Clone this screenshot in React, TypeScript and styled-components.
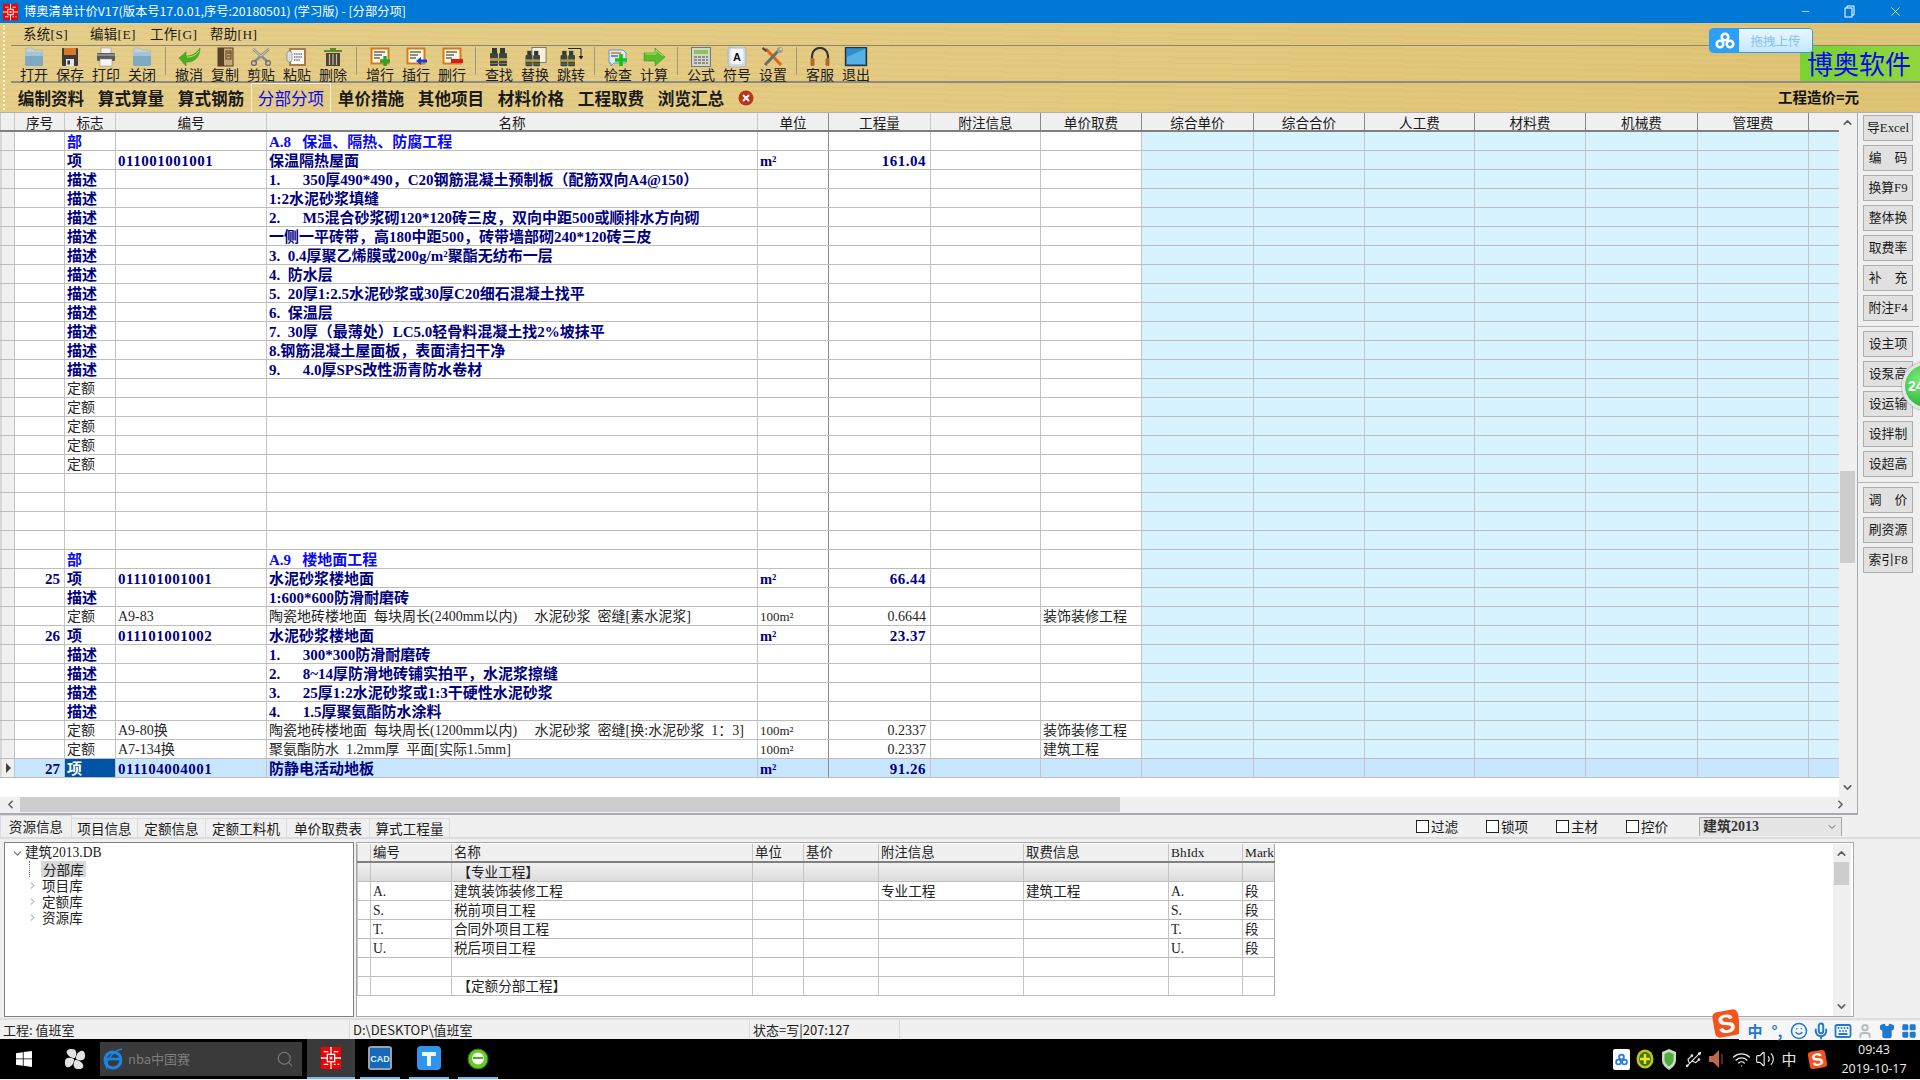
import React from 'react';
import styled, { createGlobalStyle } from 'styled-components';
import { ChevronUp, ChevronDown, ChevronLeft, ChevronRight, Search, Volume2, Wifi, Mic, Smile, Keyboard, Shirt, LayoutGrid, User, Minus, X, Usb } from 'lucide-react';

const SERIFISH = `"Liberation Serif", "Noto Sans CJK SC", serif`;
const SANS = `"Noto Sans CJK SC", "Liberation Sans", sans-serif`;

const Global = createGlobalStyle`
  html, body { margin: 0; padding: 0; width: 1920px; height: 1080px; overflow: hidden; background: #f0f0f0; }
  * { box-sizing: border-box; }
  #root { width: 1920px; height: 1080px; overflow: hidden; font-family: ${SERIFISH}; }
`;

const Page = styled.div`
  position: relative;
  width: 1920px;
  height: 1080px;
  overflow: hidden;
  display: flex;
  flex-direction: column;
`;

/* ---------- title bar ---------- */
const TitleBar = styled.div`
  height: 23px;
  background: #0078d7;
  display: flex;
  align-items: center;
  color: #fff;
  font: 12.3px/23px ${SANS};
  padding-left: 3px;
`;
const TitleText = styled.span`
  margin-left: 6px;
  white-space: pre;
`;
const WinButtons = styled.div`
  margin-left: auto;
  display: flex;
  align-items: center;
  gap: 33px;
  padding-right: 17px;
`;

/* ---------- gold area ---------- */
const Gold = styled.div`
  position: relative;
  height: 90px;
  background:
    repeating-linear-gradient(1deg, rgba(255,255,255,.07) 0 1px, transparent 1px 3px, rgba(120,80,0,.04) 3px 4px, transparent 4px 6px),
    linear-gradient(90deg, #e5cd88, #e3c97f 50%, #dfc374);
  border-bottom: 1px solid #b0b0bc;
`;
const Gripper = styled.div`
  position: absolute;
  left: 3px;
  top: 2px;
  bottom: 2px;
  border-left: 2px dotted #fff6d8;
`;
const MenuBar = styled.div`
  height: 23px;
  border-bottom: 1px solid #8a8776;
  margin-left: 11px;
  padding: 2px 0 0 12px;
  display: flex;
  font: 13.4px/20px ${SERIFISH};
  letter-spacing: 0.4px;
  color: #1a1a1a;
`;
const MenuItem = styled.span<{ $w: number }>`
  width: ${p => p.$w}px;
  white-space: nowrap;
`;
const Toolbar = styled.div`
  height: 37px;
  border-bottom: 2px solid #8c8c86;
  margin-left: 11px;
  padding: 1px 0 0 5px;
  display: flex;
`;
const ToolButton = styled.div`
  width: 36px;
  display: flex;
  flex-direction: column;
  align-items: center;
  color: #1c1c1c;
  font: 14px/15px ${SANS};
  white-space: nowrap;
`;
const ToolIcon = styled.svg`
  width: 24px;
  height: 20px;
  flex: none;
`;
const ToolSep = styled.div`
  width: 1px;
  height: 28px;
  margin: 0 5px 0 5px;
  background: #9b9686;
`;
const BrandBox = styled.div`
  margin-left: auto;
  width: 120px;
  height: 35px;
  margin-top: -1px;
  background: linear-gradient(90deg, #78d232, #92d63e);
  color: #0a0ae8;
  font: 26px/34px ${SANS};
  padding-left: 7px;
  white-space: nowrap;
`;
const TabsBar = styled.div`
  height: 29px;
  padding-left: 11px;
  display: flex;
  align-items: stretch;
  font: 700 16.6px/28px ${SANS};
  color: #1a1a1a;
`;
const NavTab = styled.div<{ $active?: boolean }>`
  width: 80px;
  text-align: center;
  white-space: nowrap;
  color: ${p => (p.$active ? '#0a0aee' : '#1a1a1a')};
  font-weight: ${p => (p.$active ? 400 : 700)};
  border-left: 1px solid ${p => (p.$active ? '#f6efd8' : 'transparent')};
  border-right: 1px solid ${p => (p.$active ? '#f6efd8' : 'transparent')};
  border-top: 1px solid ${p => (p.$active ? '#f6efd8' : 'transparent')};
`;
const CloseDot = styled.svg`
  width: 16px;
  height: 16px;
  align-self: center;
  margin-left: 7px;
`;
const Cost = styled.div`
  margin-left: auto;
  margin-right: 61px;
  font: 700 14.5px/28px ${SANS};
  color: #111;
`;
const UploadPill = styled.div`
  position: absolute;
  left: 1709px;
  top: 5px;
  width: 104px;
  height: 25px;
  display: flex;
  border: 1px solid #2a9cf5;
  border-radius: 4px;
  overflow: hidden;
`;
const PillIcon = styled.div`
  width: 29px;
  background: #2c9ff7;
  display: flex;
  align-items: center;
  justify-content: center;
`;
const PillText = styled.div`
  flex: 1;
  background: linear-gradient(180deg, #eaf7ff, #c4e8ff);
  color: #86c3ee;
  font: 12.5px/23px ${SANS};
  text-align: center;
`;

/* ---------- main grid ---------- */
const Main = styled.div`
  height: 702px;
  display: flex;
  background: #f0f0f0;
`;
const GridPanel = styled.div`
  width: 1858px;
  display: flex;
  flex-direction: column;
  border-right: 1px solid #a9a9b4;
  border-bottom: 2px solid #a9a9b4;
`;
const GridScroll = styled.div`
  height: 684px;
  display: flex;
  background: #fff;
`;
const GRID_COLS = '14px 50px 51px 151px 491px 71px 102px 110px 101px 112px 111px 110px 111px 112px 111px 31px';
const Table = styled.div`
  width: 1839px;
  font-family: ${SERIFISH};
`;
const HeadRow = styled.div`
  display: grid;
  grid-template-columns: ${GRID_COLS};
  height: 19px;
  background: #f0f0f0;
  border-bottom: 2px solid #808080;
  font: 13.6px/17px ${SANS};
  color: #1a1a1a;
  text-align: center;
`;
const HeadCell = styled.div<{ $dark?: boolean }>`
  border-left: 1px solid ${p => (p.$dark ? '#8a8a8a' : '#c8c8c8')};
  white-space: nowrap;
  span { position: relative; top: 1px; }
`;
type RowKind = 'bu' | 'xiang' | 'miao' | 'ding' | 'blank';
const Row = styled.div<{ $kind: RowKind; $sel?: boolean }>`
  display: grid;
  grid-template-columns: ${GRID_COLS};
  grid-template-rows: 18px;
  height: 19px;
  border-bottom: 1px solid #bdbdbd;
  background: ${p => (p.$sel ? '#c8e6ff' : '#fff')};
  color: ${p => (p.$kind === 'bu' ? '#0a0af0' : p.$kind === 'ding' ? '#262626' : '#000080')};
  font-size: ${p => (p.$kind === 'ding' ? '14px' : '15px')};
  font-weight: ${p => (p.$kind === 'ding' ? 400 : 700)};
  line-height: 20px;
`;
const Cell = styled.div<{ $blue?: boolean; $right?: boolean; $dark?: boolean; $pick?: boolean; $sel?: boolean; $wide?: boolean }>`
  border-left: 1px solid ${p => (p.$dark ? '#8a8a8a' : '#c4c4c4')};
  padding: 0 ${p => (p.$right ? '4px' : '0')} 0 ${p => (p.$right ? '0' : '2px')};
  text-align: ${p => (p.$right ? 'right' : 'left')};
  white-space: pre;
  letter-spacing: ${p => (p.$wide ? '0.5px' : '0')};
  background: ${p => (p.$pick ? '#0054a6' : p.$sel ? 'transparent' : p.$blue ? '#d6f3ff' : 'transparent')};
  color: ${p => (p.$pick ? '#fff' : 'inherit')};
`;
const Gutter = styled.div`
  background: #f0f0f0;
  border-left: 2px solid #d8d8d8;
  display: flex;
  align-items: center;
  justify-content: center;
`;
const RowArrow = styled.i`
  width: 0;
  height: 0;
  border-left: 5px solid #404040;
  border-top: 5px solid transparent;
  border-bottom: 5px solid transparent;
`;
const UnitCell = styled(Cell)<{ $big?: boolean }>`
  font-size: ${p => (p.$big ? '14.5px' : '13px')};
`;
const VBar = styled.div`
  width: 18px;
  background: #f0f0f0;
  display: flex;
  flex-direction: column;
  align-items: center;
  color: #606060;
  padding: 3px 1px 3px 0;
`;
const VThumb = styled.div<{ $top: number; $h: number; $w: number }>`
  width: ${p => p.$w}px;
  height: ${p => p.$h}px;
  margin-top: ${p => p.$top}px;
  background: #cdcdcd;
  flex: none;
`;
const VEnd = styled.div`
  margin-top: auto;
  display: flex;
`;
const HBar = styled.div`
  height: 16px;
  background: #f0f0f0;
  display: flex;
  align-items: center;
  color: #606060;
  padding: 0 10px 1px 4px;
`;
const HThumb = styled.div`
  width: 1100px;
  height: 15px;
  margin-left: 3px;
  background: #cdcdcd;
`;
const HEnd = styled.div`
  margin-left: auto;
  display: flex;
`;

/* ---------- right side ---------- */
const Side = styled.div`
  width: 62px;
  padding: 2px 0 0 5px;
  display: flex;
  flex-direction: column;
  gap: 4px;
  background: #f0f0f0;
`;
const SideBtn = styled.div`
  width: 50px;
  height: 26px;
  flex: none;
  background: #e1e1e1;
  border: 1px solid #adadad;
  padding-top: 1px;
  font: 12.8px/23px ${SERIFISH};
  color: #1a1a1a;
  text-align: center;
  white-space: pre;
`;
const SideLine = styled.div`
  height: 1px;
  flex: none;
  margin: 1px 0 0 -5px;
  width: 61px;
  background: #b4b4b4;
`;
const GreenBall = styled.div`
  position: absolute;
  left: 1902px;
  top: 362px;
  width: 48px;
  height: 48px;
  border-radius: 50%;
  background: radial-gradient(circle at 35% 35%, #78ec78, #2fb83c 70%);
  border: 3px solid #e6e6e6;
  box-shadow: 0 0 2px #777;
  color: #fff;
  font: 700 14px/42px "Liberation Sans", sans-serif;
  padding-left: 3px;
`;

/* ---------- bottom tabs ---------- */
const BottomTabs = styled.div`
  height: 24px;
  display: flex;
  align-items: flex-end;
  background: #f0f0f0;
  border-bottom: 2px solid #dcdcdc;
  font: 13.6px/18px ${SANS};
  color: #1a1a1a;
  flex: none;
`;
const BTab = styled.div<{ $w: number; $active?: boolean }>`
  width: ${p => p.$w}px;
  height: ${p => (p.$active ? 22 : 19)}px;
  text-align: center;
  white-space: nowrap;
  border: 1px solid #dcdcdc;
  border-left-width: ${p => (p.$active ? 1 : 0)}px;
  border-bottom: 0;
  line-height: ${p => (p.$active ? 20 : 18)}px;
`;
const Checks = styled.div`
  margin-left: auto;
  align-self: flex-start;
  margin-top: 2px;
  display: flex;
  align-items: center;
  height: 19px;
`;
const Check = styled.label`
  width: 70px;
  display: flex;
  align-items: center;
  gap: 2px;
  white-space: nowrap;
  font: 13.6px/19px ${SANS};
`;
const CheckBox = styled.i`
  width: 13px;
  height: 13px;
  border: 1px solid #222;
  background: #fff;
  display: block;
`;
const Combo = styled.div`
  width: 143px;
  height: 19px;
  margin: 0 78px 0 3px;
  background: #e5e5e5;
  border: 1px solid #a8a8a8;
  border-bottom: 0;
  display: flex;
  align-items: center;
  justify-content: space-between;
  padding: 0 3px 0 3px;
  font: 700 14px/18px ${SERIFISH};
  color: #333;
`;

/* ---------- resource panels ---------- */
const ResArea = styled.div`
  height: 181px;
  flex: none;
  padding: 3px 66px 0 4px;
  display: flex;
  gap: 2px;
  background: #f0f0f0;
  border-bottom: 2px solid #dedede;
`;
const TreeBox = styled.div`
  width: 350px;
  height: 175px;
  background: #fff;
  border: 1px solid #808080;
  font: 13.6px/16px ${SANS};
  color: #222;
  padding: 2px 0 0 6px;
`;
const TreeRow = styled.div<{ $level: number }>`
  height: 16px;
  display: flex;
  align-items: center;
  padding-left: ${p => p.$level * 16}px;
  white-space: nowrap;
  color: #222;
  svg { margin-right: 4px; flex: none; color: #777; }
`;
const TreeDot = styled.i`
  width: 14px;
  height: 16px;
  margin-left: 2px;
  border-left: 1px dotted #666;
  flex: none;
`;
const TreeSel = styled.span`
  background: #d9d9d9;
  padding: 0 2px 0 2px;
  margin-left: -2px;
`;
const TreeLabel = styled.span`
  margin-left: -3px;
  font-family: ${SERIFISH};
`;
const ResBox = styled.div`
  flex: 1;
  height: 175px;
  background: #fff;
  border: 1px solid #a8a8a8;
  display: flex;
  justify-content: space-between;
  padding: 1px 2px 0 0;
`;
const RES_COLS = '13px 81px 301px 51px 75px 145px 145px 74px 33px';
const ResTable = styled.div`
  width: 918px;
`;
const ResHead = styled.div`
  display: grid;
  grid-template-columns: ${RES_COLS};
  height: 19px;
  background: #f0f0f0;
  border-bottom: 2px solid #808080;
  font: 13.4px/17px ${SERIFISH};
  color: #222;
`;
const ResRowEl = styled.div<{ $grey?: boolean }>`
  display: grid;
  grid-template-columns: ${RES_COLS};
  grid-template-rows: 18px;
  height: 19px;
  background: ${p => (p.$grey ? 'linear-gradient(180deg,#f0f0f0,#dcdcdc)' : '#fff')};
  border-bottom: 1px solid #bdbdbd;
  font: 13.6px/20px ${SERIFISH};
  color: #222;
`;
const ResCell = styled.div<{ $last?: boolean }>`
  border-left: 1px solid #c4c4c4;
  ${p => (p.$last ? 'border-right: 1px solid #a8a8a8;' : '')}
  padding-left: 2px;
  white-space: pre;
`;

/* ---------- status ---------- */
const StatusBar = styled.div`
  height: 19px;
  flex: none;
  display: flex;
  background: #f0f0f0;
  font: 13px/20px ${SANS};
  color: #222;
`;
const StatusCell = styled.div<{ $w: number }>`
  width: ${p => p.$w}px;
  padding-left: 3px;
  border-right: 1px solid #d8d8d8;
  white-space: nowrap;
`;

/* ---------- IME bar ---------- */
const ImeBar = styled.div`
  position: absolute;
  left: 1711px;
  top: 1011px;
  height: 29px;
  width: 209px;
  display: flex;
  align-items: flex-end;
`;
const ImeStrip = styled.div`
  flex: 1;
  height: 19px;
  margin-left: -3px;
  padding-left: 5px;
  background: #f6f6f6;
  display: flex;
  align-items: center;
  color: #1f78d1;
`;
const ImeItem = styled.div`
  width: 22px;
  display: flex;
  justify-content: center;
  flex: none;
  font: 700 15px/17px ${SANS};
`;

/* ---------- taskbar ---------- */
const Taskbar = styled.div`
  height: 40px;
  flex: none;
  background: #000;
  display: flex;
  align-items: center;
  color: #fff;
`;
const Start = styled.svg`
  width: 16px;
  height: 16px;
  margin-left: 16px;
`;
const Fan = styled.svg`
  width: 22px;
  height: 22px;
  margin-left: 32px;
`;
const SearchBox = styled.div`
  width: 202px;
  height: 34px;
  margin-left: 14px;
  background: #3a3a3a;
  display: flex;
  align-items: center;
  color: #7d7d7d;
  font: 13px/36px ${SANS};
  padding: 0 8px 0 3px;
  gap: 5px;
`;
const SearchIcon = styled.span`
  margin-left: auto;
  display: flex;
  color: #7d7d7d;
`;
const AppSlot = styled.div<{ $active?: boolean; $w: number; $ml: number }>`
  width: ${p => p.$w}px;
  height: 40px;
  margin-left: ${p => p.$ml}px;
  background: ${p => (p.$active ? '#3a3a3a' : 'transparent')};
  border-bottom: 2px solid #76b9ed;
  display: flex;
  align-items: center;
  justify-content: center;
`;
const Tray = styled.div`
  margin-left: auto;
  display: flex;
  align-items: center;
  height: 40px;
  color: #e8e8e8;
`;
const TrayItem = styled.div<{ $gap?: number }>`
  width: 24px;
  margin-left: ${p => p.$gap ?? 0}px;
  display: flex;
  justify-content: center;
  font: 15px/20px ${SANS};
`;
const Clock = styled.div`
  width: 68px;
  margin: 0 12px 0 11px;
  text-align: center;
  font: 12.5px/19px "Open Sans", "Liberation Sans", sans-serif;
  color: #eee;
  white-space: nowrap;
`;

/* ---------- drawings ---------- */
const RedLogo = ({ w, h }: { w: number; h: number }) => (
  <svg width={w} height={h} viewBox="0 0 22 24">
    <rect width="22" height="24" fill="#f40000" />
    <g stroke="#fff" fill="none" strokeWidth="1.4">
      <rect x="7" y="8" width="8" height="8" />
      <path d="M11 0v8M11 16v8M0 12h7M15 12h7M3 5h5M14 5h5M14 19h2M18 19h2M3 19h5" />
    </g>
    <rect x="9.6" y="10.6" width="2.8" height="2.8" fill="#fff" />
  </svg>
);
const Folder = () => (
  <ToolIcon viewBox="0 0 24 20">
    <path d="M4 1h6l2 2h8v3H4z" fill="#c7d2d4" stroke="#8aa" strokeWidth=".5" />
    <rect x="3" y="5" width="18" height="14" rx="1.5" fill="#7ea9c4" />
    <rect x="3" y="5" width="18" height="4" fill="#a4c4d6" />
  </ToolIcon>
);
const Floppy = () => (
  <ToolIcon viewBox="0 0 24 20">
    <rect x="4" y="1" width="16" height="18" rx="1" fill="#3c3c3c" />
    <rect x="6" y="1" width="12" height="7" fill="#d8792a" />
    <rect x="8" y="12" width="8" height="7" fill="#e6e6e6" />
    <rect x="9.5" y="13.5" width="2.5" height="4" fill="#333" />
  </ToolIcon>
);
const Printer = () => (
  <ToolIcon viewBox="0 0 24 20">
    <rect x="7" y="1" width="10" height="6" fill="#f2f2f2" stroke="#888" strokeWidth=".5" />
    <rect x="3" y="6" width="18" height="8" rx="1" fill="#5a5a5a" />
    <rect x="3" y="7" width="18" height="2" fill="#8c8c8c" />
    <rect x="6" y="12" width="12" height="7" fill="#f5f5f5" stroke="#888" strokeWidth=".5" />
  </ToolIcon>
);
const Undo = () => (
  <ToolIcon viewBox="0 0 24 20">
    <path d="M2 11 L9 5 V9 C14 9 19 7 23 1 C23 10 17 16 9 15 V19 Z" fill="#4fae20" stroke="#2e8a10" strokeWidth=".5" />
    <path d="M10 10 C15 10 19 8 22 4" stroke="#b9ec7a" strokeWidth="1" fill="none" />
  </ToolIcon>
);
const Book = () => (
  <ToolIcon viewBox="0 0 24 20">
    <rect x="5" y="1" width="15" height="18" fill="#c9a877" stroke="#5a3e22" />
    <rect x="5" y="1" width="6" height="18" fill="#5c4026" />
    <path d="M14 6h4M14 9h3" stroke="#3a2a1a" />
    <rect x="13" y="4" width="5" height="8" fill="none" stroke="#5a3e22" />
  </ToolIcon>
);
const Scissors = () => (
  <ToolIcon viewBox="0 0 24 20">
    <path d="M4 2 L19 15 M20 2 L5 15" stroke="#8c8c8c" strokeWidth="2.6" />
    <path d="M4 2 L12 9 M20 2 L12 9" stroke="#cfcfcf" strokeWidth="1" />
    <circle cx="5" cy="16" r="2.4" fill="none" stroke="#6e6e6e" strokeWidth="1.4" />
    <circle cx="19" cy="16" r="2.4" fill="none" stroke="#6e6e6e" strokeWidth="1.4" />
  </ToolIcon>
);
const Clipboard = () => (
  <ToolIcon viewBox="0 0 24 20">
    <rect x="4" y="1" width="17" height="18" fill="#a97c4a" rx="1" />
    <rect x="6" y="3" width="13" height="14" fill="#fafafa" />
    <path d="M9 7h8M9 10h8M9 13h6" stroke="#333" strokeWidth="1" strokeDasharray="1.5 .7" />
    <rect x="2" y="4" width="5" height="11" rx="2.5" fill="#d8e0e4" stroke="#777" strokeWidth=".6" />
  </ToolIcon>
);
const Trash = () => (
  <ToolIcon viewBox="0 0 24 20">
    <path d="M3 4h18" stroke="#5e8a2c" strokeWidth="2" />
    <rect x="9" y="1" width="6" height="2" fill="#5e8a2c" />
    <rect x="5" y="6" width="14" height="13" fill="#4a4438" />
    <path d="M8.5 7v11M12 7v11M15.5 7v11" stroke="#c9bc96" strokeWidth="1.2" />
  </ToolIcon>
);
const RowIcon = ({ kind }: { kind: 'add' | 'ins' | 'del' }) => (
  <ToolIcon viewBox="0 0 24 20">
    <rect x="3.5" y="1.5" width="17" height="15" fill="#fff7e0" stroke="#d47a1c" strokeWidth="2" />
    <path d="M6 5h11M6 8h8M6 11h6" stroke="#222" strokeWidth="1" />
    {kind === 'add' && <path d="M17 9v10M12 14h10" stroke="#2fa02f" strokeWidth="3.4" />}
    {kind === 'ins' && <path d="M12 14l5-4v2.5h6v3h-6V18z" fill="#1040e0" />}
    {kind === 'del' && <rect x="11" y="12" width="12" height="4" fill="#e01818" />}
  </ToolIcon>
);
const BinoShape = () => (
  <g>
    <rect x="5" y="1" width="5" height="6" fill="#2e3a34" />
    <rect x="13" y="1" width="5" height="6" fill="#2e3a34" />
    <rect x="3" y="6" width="8" height="13" rx="1" fill="#3a4640" />
    <rect x="12" y="6" width="8" height="13" rx="1" fill="#3a4640" />
    <rect x="3" y="11" width="17" height="3" fill="#b49a3e" />
    <rect x="3" y="16" width="17" height="1" fill="#7a7a60" />
  </g>
);
const Binocular = () => (<ToolIcon viewBox="0 0 24 20"><BinoShape /></ToolIcon>);
const BinoReplace = () => (
  <ToolIcon viewBox="0 0 24 20">
    <rect x="9" y="0.5" width="14" height="15" fill="#f7f1dc" stroke="#555" strokeWidth=".7" />
    <g transform="translate(0 3) scale(.85)"><BinoShape /></g>
  </ToolIcon>
);
const BinoJump = () => (
  <ToolIcon viewBox="0 0 24 20">
    <path d="M9 1.5h13V9" fill="none" stroke="#222" strokeWidth="1" />
    <path d="M19.5 9h5L22 12.5z" fill="#222" />
    <g transform="translate(-1 3) scale(.85)"><BinoShape /></g>
  </ToolIcon>
);
const Check2 = () => (
  <ToolIcon viewBox="0 0 24 20">
    <path d="M3 3h14l3 3v10H8l-3 3v-3H3z" fill="#dfe9f5" stroke="#6e94c6" />
    <path d="M5 6h10" stroke="#d86a1a" strokeWidth="1.4" /><path d="M5 9h7" stroke="#2a6ac8" strokeWidth="1.4" />
    <path d="M15 7v12M9 13h12" stroke="#16c216" strokeWidth="3.6" />
  </ToolIcon>
);
const ArrowGo = () => (
  <ToolIcon viewBox="0 0 24 20">
    <path d="M2 6h11V1l10 9-10 9v-5H2z" fill="#58bc2e" stroke="#3a9a1a" strokeWidth=".6" />
    <path d="M3 7h11V3l7 6" fill="none" stroke="#a6e878" strokeWidth="1" />
  </ToolIcon>
);
const Calc = () => (
  <ToolIcon viewBox="0 0 24 20">
    <rect x="2.5" y="0.5" width="19" height="19" fill="#d2d6ce" stroke="#777" />
    <rect x="5" y="3" width="14" height="4" fill="#8fc35a" />
    <path d="M5 10h14M5 13h14M5 16h14" stroke="#777" strokeWidth="1.4" strokeDasharray="3 1" />
  </ToolIcon>
);
const KeyA = () => (
  <ToolIcon viewBox="0 0 24 20">
    <rect x="3" y="0" width="18" height="20" rx="3" fill="#cfd9e6" stroke="#a5b4c6" />
    <rect x="5.5" y="2" width="13" height="15" rx="2" fill="#f4f7fb" />
    <text x="12" y="14" textAnchor="middle" fontSize="11" fontWeight="700" fontFamily="Liberation Sans" fill="#111">A</text>
  </ToolIcon>
);
const Tools = () => (
  <ToolIcon viewBox="0 0 24 20">
    <path d="M5 2L20 18" stroke="#d86a1a" strokeWidth="3" />
    <path d="M19 2L4 18" stroke="#6d6d6d" strokeWidth="3" />
    <circle cx="19" cy="3" r="3" fill="#9a9a9a" /><circle cx="20" cy="2" r="1.5" fill="#e3c97f" />
    <path d="M2 0l4 3-1 2-4-3z" fill="#444" />
  </ToolIcon>
);
const Headset = () => (
  <ToolIcon viewBox="0 0 24 20">
    <path d="M4 13V9a8 8 0 0116 0v4" fill="none" stroke="#333" strokeWidth="2.2" />
    <rect x="2.5" y="11" width="4" height="8" rx="1.5" fill="#b06a28" />
    <rect x="17.5" y="11" width="4" height="8" rx="1.5" fill="#b06a28" />
  </ToolIcon>
);
const Tablet = () => (
  <ToolIcon viewBox="0 0 24 20">
    <rect x="1.5" y="0.5" width="21" height="18" fill="#2f8fd0" stroke="#26333e" strokeWidth="1.4" />
    <path d="M3 10L21 2v15H3z" fill="#58b1e6" />
  </ToolIcon>
);

const tools: (React.ReactNode | null)[][] = [
  [<Folder />, '打开'], [<Floppy />, '保存'], [<Printer />, '打印'], [<Folder />, '关闭'], null as any,
  [<Undo />, '撤消'], [<Book />, '复制'], [<Scissors />, '剪贴'], [<Clipboard />, '粘贴'], [<Trash />, '删除'], null as any,
  [<RowIcon kind="add" />, '增行'], [<RowIcon kind="ins" />, '插行'], [<RowIcon kind="del" />, '删行'], null as any,
  [<Binocular />, '查找'], [<BinoReplace />, '替换'], [<BinoJump />, '跳转'], null as any,
  [<Check2 />, '检查'], [<ArrowGo />, '计算'], null as any,
  [<Calc />, '公式'], [<KeyA />, '符号'], [<Tools />, '设置'], null as any,
  [<Headset />, '客服'], [<Tablet />, '退出'],
];

const headers = ['序号', '标志', '编号', '名称', '单位', '工程量', '附注信息', '单价取费', '综合单价', '综合合价', '人工费', '材料费', '机械费', '管理费', ''];

type R = { k: RowKind; seq?: string; flag?: string; code?: string; name?: string; unit?: string; qty?: string; fee?: string; sel?: boolean };
const m = (name: string): R => ({ k: 'miao', flag: '描述', name });
const d = (): R => ({ k: 'ding', flag: '定额' });
const rows: R[] = [
  { k: 'bu', flag: '部', name: 'A.8   保温、隔热、防腐工程' },
  { k: 'xiang', flag: '项', code: '011001001001', name: '保温隔热屋面', unit: 'm²', qty: '161.04' },
  m('1.      350厚490*490，C20钢筋混凝土预制板（配筋双向A4@150）'),
  m('1:2水泥砂浆填缝'),
  m('2.      M5混合砂浆砌120*120砖三皮，双向中距500或顺排水方向砌'),
  m('一侧一平砖带，高180中距500，砖带墙部砌240*120砖三皮'),
  m('3.  0.4厚聚乙烯膜或200g/m²聚酯无纺布一层'),
  m('4.  防水层'),
  m('5.  20厚1:2.5水泥砂浆或30厚C20细石混凝土找平'),
  m('6.  保温层'),
  m('7.  30厚（最薄处）LC5.0轻骨料混凝土找2%坡抹平'),
  m('8.钢筋混凝土屋面板，表面清扫干净'),
  m('9.      4.0厚SPS改性沥青防水卷材'),
  d(), d(), d(), d(), d(),
  { k: 'blank' }, { k: 'blank' }, { k: 'blank' }, { k: 'blank' },
  { k: 'bu', flag: '部', name: 'A.9   楼地面工程' },
  { k: 'xiang', seq: '25', flag: '项', code: '011101001001', name: '水泥砂浆楼地面', unit: 'm²', qty: '66.44' },
  m('1:600*600防滑耐磨砖'),
  { k: 'ding', flag: '定额', code: 'A9-83', name: '陶瓷地砖楼地面  每块周长(2400mm以内)     水泥砂浆  密缝[素水泥浆]', unit: '100m²', qty: '0.6644', fee: '装饰装修工程' },
  { k: 'xiang', seq: '26', flag: '项', code: '011101001002', name: '水泥砂浆楼地面', unit: 'm²', qty: '23.37' },
  m('1.      300*300防滑耐磨砖'),
  m('2.      8~14厚防滑地砖铺实拍平，水泥浆擦缝'),
  m('3.      25厚1:2水泥砂浆或1:3干硬性水泥砂浆'),
  m('4.      1.5厚聚氨酯防水涂料'),
  { k: 'ding', flag: '定额', code: 'A9-80换', name: '陶瓷地砖楼地面  每块周长(1200mm以内)     水泥砂浆  密缝[换:水泥砂浆  1：3]', unit: '100m²', qty: '0.2337', fee: '装饰装修工程' },
  { k: 'ding', flag: '定额', code: 'A7-134换', name: '聚氨酯防水  1.2mm厚  平面[实际1.5mm]', unit: '100m²', qty: '0.2337', fee: '建筑工程' },
  { k: 'xiang', seq: '27', flag: '项', code: '011104004001', name: '防静电活动地板', unit: 'm²', qty: '91.26', sel: true },
];

const sideGroups = [
  ['导Excel', '编    码', '换算F9', '整体换', '取费率', '补    充', '附注F4'],
  ['设主项', '设泵高', '设运输', '设拌制', '设超高'],
  ['调    价', '刷资源', '索引F8'],
];

const resHead = ['', '编号', '名称', '单位', '基价', '附注信息', '取费信息', 'BhIdx', 'Mark'];
const resRows = [
  ['', '', ' 【专业工程】', '', '', '', '', '', ''],
  ['', 'A.', '建筑装饰装修工程', '', '', '专业工程', '建筑工程', 'A.', '段'],
  ['', 'S.', '税前项目工程', '', '', '', '', 'S.', '段'],
  ['', 'T.', '合同外项目工程', '', '', '', '', 'T.', '段'],
  ['', 'U.', '税后项目工程', '', '', '', '', 'U.', '段'],
  ['', '', '', '', '', '', '', '', ''],
  ['', '', ' 【定额分部工程】', '', '', '', '', '', ''],
];

const SogouS = ({ size, rot }: { size: number; rot: number }) => (
  <svg width={size} height={size} viewBox="0 0 24 24">
    <g transform={`rotate(${rot} 12 12)`}>
      <rect x="2" y="2" width="20" height="20" rx="4" fill="#f4541c" />
      <text x="12" y="19" textAnchor="middle" fontSize="20" fontWeight="700" fontFamily="Liberation Sans" fill="#fff">S</text>
    </g>
  </svg>
);

export default function App() {
  return (
    <Page>
      <Global />
      <TitleBar>
        <RedLogo w={15} h={18} />
        <TitleText>博奥清单计价V17(版本号17.0.01,序号:20180501) (学习版) - [分部分项]</TitleText>
        <WinButtons>
          <Minus size={11} strokeWidth={1.5} />
          <svg width="11" height="13" viewBox="0 0 11 13">
            <rect x="1" y="3" width="7" height="9" fill="none" stroke="#fff" />
            <path d="M3 3V1h7v9H8" fill="none" stroke="#fff" />
          </svg>
          <X size={15} strokeWidth={1.2} />
        </WinButtons>
      </TitleBar>

      <Gold>
        <Gripper />
        <MenuBar>
          <MenuItem $w={67}>系统[S]</MenuItem>
          <MenuItem $w={60}>编辑[E]</MenuItem>
          <MenuItem $w={60}>工作[G]</MenuItem>
          <MenuItem $w={60}>帮助[H]</MenuItem>
        </MenuBar>
        <Toolbar>
          {tools.map((t, i) =>
            t ? (
              <ToolButton key={i}>
                {t[0]}
                <span>{t[1]}</span>
              </ToolButton>
            ) : (
              <ToolSep key={i} />
            )
          )}
          <BrandBox>博奥软件</BrandBox>
        </Toolbar>
        <TabsBar>
          {['编制资料', '算式算量', '算式钢筋', '分部分项', '单价措施', '其他项目', '材料价格', '工程取费', '浏览汇总'].map(t => (
            <NavTab key={t} $active={t === '分部分项'}>{t}</NavTab>
          ))}
          <CloseDot viewBox="0 0 16 16">
            <circle cx="8" cy="8" r="7.5" fill="#b8341a" />
            <path d="M5 5l6 6M11 5l-6 6" stroke="#fff" strokeWidth="2" />
          </CloseDot>
          <Cost>工程造价=元</Cost>
        </TabsBar>
        <UploadPill>
          <PillIcon>
            <svg width="20" height="17" viewBox="0 0 20 17" fill="none" stroke="#fff" strokeWidth="2.6">
              <circle cx="10" cy="5" r="3.3" />
              <circle cx="5" cy="12" r="3.3" />
              <circle cx="15" cy="12" r="3.3" />
            </svg>
          </PillIcon>
          <PillText>拖拽上传</PillText>
        </UploadPill>
      </Gold>

      <Main>
        <GridPanel>
          <GridScroll>
            <Table>
              <HeadRow>
                <HeadCell />
                {headers.map((h, i) => (
                  <HeadCell key={i} $dark={i >= 7 || i === 5}><span>{h}</span></HeadCell>
                ))}
              </HeadRow>
              {rows.map((r, i) => (
                <Row key={i} $kind={r.k} $sel={r.sel}>
                  <Gutter>{r.sel && <RowArrow />}</Gutter>
                  <Cell $right>{r.seq}</Cell>
                  <Cell $pick={r.sel}>{r.flag}</Cell>
                  <Cell $wide={r.k === 'xiang'}>{r.code}</Cell>
                  <Cell>{r.name}</Cell>
                  <UnitCell $big={r.k === 'xiang'}>{r.unit}</UnitCell>
                  <Cell $right $dark $wide={r.k === 'xiang'}>{r.qty}</Cell>
                  <Cell />
                  <Cell>{r.fee}</Cell>
                  {Array.from({ length: 7 }).map((_, j) => (
                    <Cell key={j} $blue $sel={r.sel} />
                  ))}
                </Row>
              ))}
            </Table>
            <VBar>
              <ChevronUp size={13} strokeWidth={3} />
              <VThumb $top={342} $h={92} $w={15} />
              <VEnd><ChevronDown size={13} strokeWidth={3} /></VEnd>
            </VBar>
          </GridScroll>
          <HBar>
            <ChevronLeft size={13} strokeWidth={3} />
            <HThumb />
            <HEnd><ChevronRight size={13} strokeWidth={3} /></HEnd>
          </HBar>
        </GridPanel>
        <Side>
          {sideGroups.map((g, i) => (
            <React.Fragment key={i}>
              {i > 0 && <SideLine />}
              {g.map(b => <SideBtn key={b}>{b}</SideBtn>)}
            </React.Fragment>
          ))}
        </Side>
      </Main>
      <GreenBall>24</GreenBall>

      <BottomTabs>
        <BTab $w={72} $active>资源信息</BTab>
        <BTab $w={66}>项目信息</BTab>
        <BTab $w={68}>定额信息</BTab>
        <BTab $w={81}>定额工料机</BTab>
        <BTab $w={83}>单价取费表</BTab>
        <BTab $w={80}>算式工程量</BTab>
        <Checks>
          {['过滤', '锁项', '主材', '控价'].map(c => (
            <Check key={c}><CheckBox />{c}</Check>
          ))}
          <Combo>建筑2013<ChevronDown size={12} strokeWidth={1.5} /></Combo>
        </Checks>
      </BottomTabs>

      <ResArea>
        <TreeBox>
          <TreeRow $level={0}>
            <ChevronDown size={13} strokeWidth={2.4} />
            <TreeLabel>建筑2013.DB</TreeLabel>
          </TreeRow>
          <TreeRow $level={1}><TreeDot /><TreeSel>分部库</TreeSel></TreeRow>
          {['项目库', '定额库', '资源库'].map(t => (
            <TreeRow key={t} $level={1}><ChevronRight size={11} strokeWidth={1.8} />{t}</TreeRow>
          ))}
        </TreeBox>
        <ResBox>
          <ResTable>
            <ResHead>
              {resHead.map((h, i) => <ResCell key={i} $last={i === 8}>{h}</ResCell>)}
            </ResHead>
            {resRows.map((r, i) => (
              <ResRowEl key={i} $grey={i === 0}>
                {r.map((c, j) => <ResCell key={j} $last={j === 8}>{c}</ResCell>)}
              </ResRowEl>
            ))}
          </ResTable>
          <VBar>
            <ChevronUp size={13} strokeWidth={3} />
            <VThumb $top={2} $h={23} $w={15} />
            <VEnd><ChevronDown size={13} strokeWidth={3} /></VEnd>
          </VBar>
        </ResBox>
      </ResArea>

      <StatusBar>
        <StatusCell $w={350}>工程: 值班室</StatusCell>
        <StatusCell $w={400}>D:\DESKTOP\值班室</StatusCell>
        <StatusCell $w={150}>状态=写|207:127</StatusCell>
        <StatusCell $w={959} />
      </StatusBar>

      <ImeBar>
        <SogouS size={33} rot={-10} />
        <ImeStrip>
          <ImeItem>中</ImeItem>
          <ImeItem>°,</ImeItem>
          <ImeItem><Smile size={18} /></ImeItem>
          <ImeItem><Mic size={18} strokeWidth={2.6} /></ImeItem>
          <ImeItem><Keyboard size={18} strokeWidth={2.4} /></ImeItem>
          <ImeItem><User size={16} strokeWidth={3} color="#b4bcc6" /></ImeItem>
          <ImeItem><Shirt size={16} fill="#1f78d1" /></ImeItem>
          <ImeItem><LayoutGrid size={16} fill="#1f78d1" /></ImeItem>
        </ImeStrip>
      </ImeBar>

      <Taskbar>
        <Start viewBox="0 0 16 16" fill="#fff">
          <path d="M0 2.2l6.8-1v6.3H0zM7.6 1.1L16 0v7.5H7.6zM0 8.3h6.8v6.4L0 13.7zM7.6 8.3H16V16l-8.4-1.2z" />
        </Start>
        <Fan viewBox="0 0 24 24" fill="#e2e2e2">
          <path d="M12 11C8 11 4 9 3 5c-1-4 6-5 9-3 2 2 2 6 0 9zM13 12c0-4 2-8 6-9 4-1 5 6 3 9-2 2-6 2-9 0zM12 13c4 0 8 2 9 6 1 4-6 5-9 3-2-2-2-6 0-9zM11 12c0 4-2 8-6 9-4 1-5-6-3-9 2-2 6-2 9 0z" />
        </Fan>
        <SearchBox>
          <svg width="20" height="24" viewBox="0 0 20 24">
            <ellipse cx="10" cy="13" rx="8" ry="8" fill="none" stroke="#1a86e8" strokeWidth="3" />
            <path d="M3 12h14" stroke="#1a86e8" strokeWidth="2.6" />
            <path d="M4 22C1 18 8 4 19 2" fill="none" stroke="#1a86e8" strokeWidth="1.4" />
          </svg>
          <span>nba中国赛</span>
          <SearchIcon><Search size={18} strokeWidth={1.4} /></SearchIcon>
        </SearchBox>
        <AppSlot $active $w={48} $ml={5}><RedLogo w={22} h={22} /></AppSlot>
        <AppSlot $w={40} $ml={5}>
          <svg width="24" height="24" viewBox="0 0 24 24">
            <rect width="24" height="24" rx="3" fill="#9aa3aa" />
            <rect x="2" y="2" width="20" height="20" fill="#1668b8" />
            <text x="12" y="16" textAnchor="middle" fontSize="9" fontWeight="700" fontFamily="Liberation Sans" fill="#dfeeff">CAD</text>
          </svg>
        </AppSlot>
        <AppSlot $w={40} $ml={9}>
          <svg width="24" height="24" viewBox="0 0 24 24">
            <rect width="24" height="24" rx="4" fill="#2f94ee" />
            <path d="M5 6h14v4h-5v10h-4V10H5z" fill="#eaf5ff" />
          </svg>
        </AppSlot>
        <AppSlot $w={40} $ml={9}>
          <svg width="24" height="24" viewBox="0 0 24 24">
            <circle cx="12" cy="13" r="10" fill="#6cc62a" stroke="#1f7a1f" />
            <ellipse cx="12" cy="12.5" rx="6" ry="6" fill="#f4fff0" />
            <path d="M7 12h10" stroke="#4fae20" strokeWidth="2" />
          </svg>
        </AppSlot>
        <Tray>
          <TrayItem>
            <svg width="17" height="21" viewBox="0 0 17 21">
              <rect width="17" height="21" rx="2" fill="#fff" />
              <g fill="none" stroke="#2a7ae0" strokeWidth="1.8"><circle cx="8.5" cy="8" r="2.4" /><circle cx="5.5" cy="13" r="2.4" /><circle cx="11.5" cy="13" r="2.4" /></g>
            </svg>
          </TrayItem>
          <TrayItem>
            <svg width="18" height="20" viewBox="0 0 18 20">
              <ellipse cx="9" cy="10" rx="8.5" ry="9.5" fill="#d0c010" />
              <ellipse cx="9" cy="10" rx="6" ry="7" fill="#2c7a1a" />
              <path d="M9 5v10M4 10h10" stroke="#f6e020" strokeWidth="2.6" />
            </svg>
          </TrayItem>
          <TrayItem>
            <svg width="16" height="21" viewBox="0 0 16 21">
              <path d="M8 0l7 3v8c0 5-4 8-7 10-3-2-7-5-7-10V3z" fill="#cfd8c8" />
              <path d="M8 3l4.5 2v6c0 3-2.5 5-4.5 6.5C6 16 3.5 14 3.5 11V5z" fill="#4fae3a" />
            </svg>
          </TrayItem>
          <TrayItem><Usb size={19} strokeWidth={1.4} /></TrayItem>
          <TrayItem>
            <svg width="18" height="22" viewBox="0 0 18 22">
              <path d="M1 8h4l6-6v18l-6-6H1z" fill="#c0664a" />
              <path d="M14 6v10" stroke="#4a2a20" strokeWidth="2" />
            </svg>
          </TrayItem>
          <TrayItem><Wifi size={19} strokeWidth={1.6} /></TrayItem>
          <TrayItem><Volume2 size={20} strokeWidth={1.4} /></TrayItem>
          <TrayItem>中</TrayItem>
          <TrayItem $gap={4}><SogouS size={21} rot={-10} /></TrayItem>
          <Clock>09:43<br />2019-10-17</Clock>
        </Tray>
      </Taskbar>
    </Page>
  );
}
